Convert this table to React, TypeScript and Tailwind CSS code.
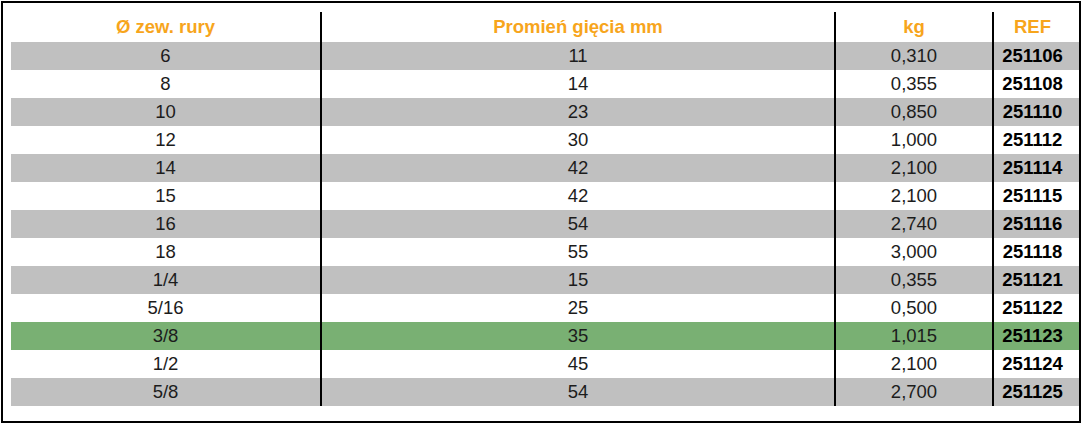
const rows = [
  ["6", "11", "0,310", "251106"],
  ["8", "14", "0,355", "251108"],
  ["10", "23", "0,850", "251110"],
  ["12", "30", "1,000", "251112"],
  ["14", "42", "2,100", "251114"],
  ["15", "42", "2,100", "251115"],
  ["16", "54", "2,740", "251116"],
  ["18", "55", "3,000", "251118"],
  ["1/4", "15", "0,355", "251121"],
  ["5/16", "25", "0,500", "251122"],
  ["3/8", "35", "1,015", "251123"],
  ["1/2", "45", "2,100", "251124"],
  ["5/8", "54", "2,700", "251125"],
];

const cols = "grid grid-cols-[311px_514px_158px_77px]";

export default function App() {
  return (
    <div className="h-[425px] w-[1084px] bg-white p-px" style={{ fontFamily: '"Liberation Sans", Arial, sans-serif' }}>
      <div className="h-[422px] w-[1080px] border-2 border-black pl-2 pt-[9px]">
        <div className={`${cols} h-[30px] text-[18.5px] font-bold text-[#f7a51c]`}>
          <div className="flex items-center justify-center border-r-2 border-black">Ø zew. rury</div>
          <div className="flex items-center justify-center border-r-2 border-black">Promień gięcia mm</div>
          <div className="flex items-center justify-center border-r-2 border-black">kg</div>
          <div className="flex items-center justify-center">REF</div>
        </div>
        {rows.map((r, i) => {
          const bg = i === 10 ? "bg-[#79b073]" : i % 2 === 0 ? "bg-[#c0c0c0]" : "bg-white";
          return (
            <div key={r[3]} className={`${cols} ${bg} h-[28px] text-[18.5px] text-[#1c1c1c]`}>
              <div className="flex items-center justify-center border-r-2 border-black">{r[0]}</div>
              <div className="flex items-center justify-center border-r-2 border-black">{r[1]}</div>
              <div className="flex items-center justify-center border-r-2 border-black">{r[2]}</div>
              <div className="flex items-center justify-center font-bold text-black">{r[3]}</div>
            </div>
          );
        })}
      </div>
    </div>
  );
}
